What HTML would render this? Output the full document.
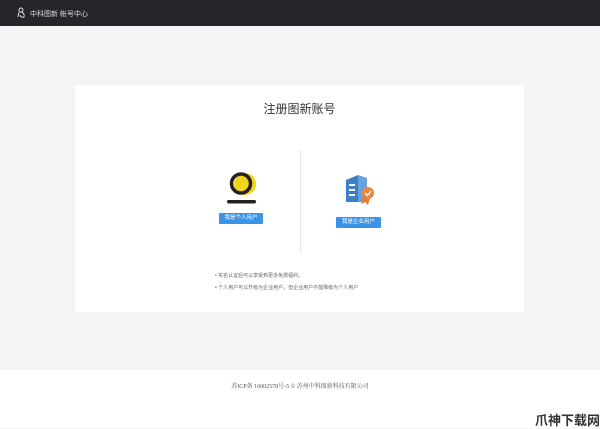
<!DOCTYPE html>
<html><head><meta charset="utf-8"><style>
body{margin:0;width:600px;height:428px;background:#f4f4f6;font-family:"Liberation Sans","Noto Sans CJK SC",sans-serif;position:relative;overflow:hidden}
.hd{position:absolute;left:0;top:0;width:600px;height:26px;background:#25262b;color:#ddd;font-size:7px}
.card{position:absolute;left:75px;top:85px;width:449px;height:227px;background:#fff}
.ft{position:absolute;left:0;top:370px;width:600px;height:58px;background:#fff}
.btn{position:absolute;background:#3a93e6;color:#fff;font-size:5.5px;text-align:center;border-radius:1px}
.ab{position:absolute}
</style></head><body>
<div class="hd"><svg class="ab" style="left:16px;top:7px" width="12" height="12" viewBox="0 0 12 12" fill="none" stroke="#ddd" stroke-width="1"><circle cx="5" cy="3" r="2"/><path d="M3 5 L2 10 M5 5 Q9 6 8 10 Q5 11 4 8"/></svg><span class="ab" style="left:30px;top:9px">中科图新 帐号中心</span></div>
<div class="card">
<div class="ab" style="left:0;width:449px;top:15px;text-align:center;font-size:12px;color:#333">注册图新账号</div>
<div class="ab" style="left:225px;top:65px;width:1px;height:102px;background:#e4e4e4"></div>
<svg class="ab" style="left:151px;top:86px" width="34" height="34"><circle cx="19" cy="13" r="11" fill="#f5d31a"/><circle cx="15" cy="12.5" r="9.5" fill="none" stroke="#222" stroke-width="3.5"/><rect x="1" y="29" width="29" height="3.5" rx="1.7" fill="#222"/></svg>
<div class="btn" style="left:144px;top:128px;width:44px;height:11px;line-height:11px">我是个人用户</div>
<svg class="ab" style="left:268px;top:87px" width="40" height="34"><path d="M3 8 L15 3 L15 30 L3 30 Z" fill="#3f7fc6"/><path d="M15 3 L24 6 L24 30 L15 30Z" fill="#6aa2dc"/><rect x="6" y="12" width="6" height="2" fill="#fff"/><rect x="6" y="17" width="6" height="2" fill="#fff"/><rect x="6" y="22" width="6" height="2" fill="#fff"/><path d="M20 24 L18 32 L22 30 L25 33 L27 26Z" fill="#e77b3a"/><circle cx="25" cy="21" r="6" fill="#e9873f"/><path d="M22 21 L24.5 23.5 L28 19" stroke="#fff" stroke-width="1.3" fill="none"/></svg>
<div class="btn" style="left:261px;top:132px;width:45px;height:11px;line-height:11px">我是企业用户</div>
<div class="ab" style="left:140px;top:185px;font-size:5px;color:#666;line-height:12px">• 实名认证后可以享受到更多免费福利。<br>• 个人用户可以升级为企业用户，但企业用户不能降级为个人用户</div>
</div>
<div class="ft"><div class="ab" style="left:0;width:600px;top:11px;text-align:center;font-size:6px;color:#555;font-family:'Liberation Serif','Noto Serif CJK SC',serif">苏ICP备 16002578号-5 © 苏州中科图新科技有限公司</div>
<div class="ab" style="left:535px;top:40px;font-size:13px;color:#333;font-weight:bold">爪神下载网</div></div>
</body></html>
